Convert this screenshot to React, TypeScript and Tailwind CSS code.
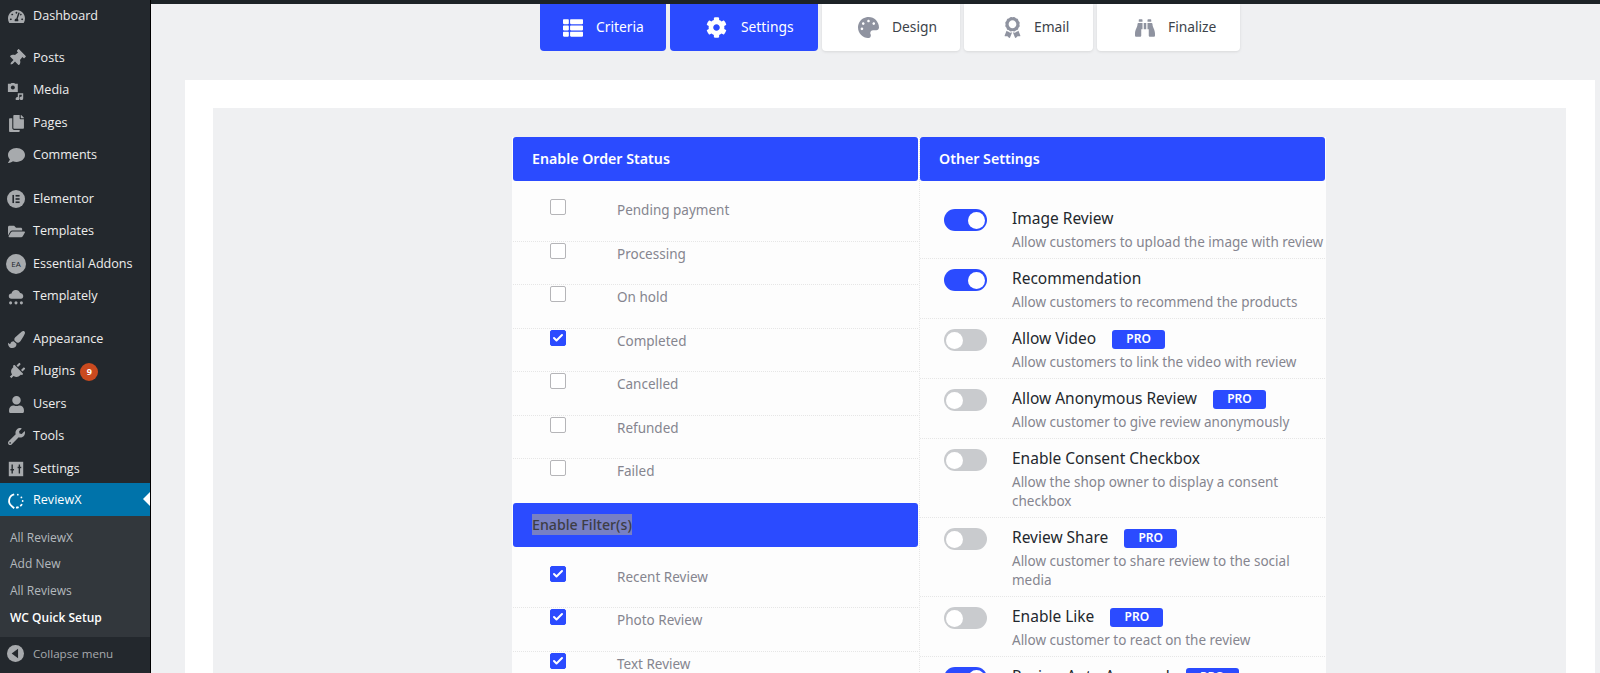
import { Check } from "lucide-react"
import {
  FaAward,
  FaBinoculars,
  FaCog,
  FaComment,
  FaCopy,
  FaFolderOpen,
  FaPaintBrush,
  FaPalette,
  FaPlug,
  FaTachometerAlt,
  FaThList,
  FaThumbtack,
  FaUser,
  FaWrench,
} from "react-icons/fa"
import type { ReactNode } from "react"

function MediaIcon() {
  return (
    <svg viewBox="0 0 20 20" className="h-[18px] w-[18px]" fill="#a7aaad">
      <path d="M1 2h3l1-1h3l1 1h3v9H1z" />
      <circle cx="6.5" cy="6" r="2.2" fill="#23282d" />
      <path d="M12 12.5h6V18a2 2 0 1 1-1.6-1.9V14.3h-2.8V18.6a2 2 0 1 1-1.6-1.9z" />
    </svg>
  )
}

function ElementorIcon() {
  return (
    <svg viewBox="0 0 20 20" className="h-[18px] w-[18px]">
      <circle cx="10" cy="10" r="10" fill="#a7aaad" />
      <rect x="6" y="5.5" width="1.8" height="9" fill="#23282d" />
      <rect x="9.5" y="5.5" width="4.5" height="1.8" fill="#23282d" />
      <rect x="9.5" y="9.1" width="4.5" height="1.8" fill="#23282d" />
      <rect x="9.5" y="12.7" width="4.5" height="1.8" fill="#23282d" />
    </svg>
  )
}

function EssentialIcon() {
  return (
    <span className="flex h-[20px] w-[20px] shrink-0 items-center justify-center rounded-full bg-[#a7aaad] text-[8px] leading-none text-[#23282d]">
      EA
    </span>
  )
}

function ReviewXIcon() {
  return (
    <svg viewBox="0 0 20 20" className="h-[18px] w-[18px]" fill="none" stroke="#fff" strokeWidth="2">
      <path d="M8 2.6a7.4 7.4 0 0 0-2.6 13.2L8 18" />
      <path d="M10 17.4a7.4 7.4 0 0 0 6.8-4.4" strokeDasharray="3 2" />
      <circle cx="12" cy="3" r="1" fill="#fff" stroke="none" />
      <circle cx="16" cy="6" r="1" fill="#fff" stroke="none" />
      <circle cx="17.4" cy="10" r="1" fill="#fff" stroke="none" />
    </svg>
  )
}

function CloudDots() {
  return (
    <svg viewBox="0 0 20 20" className="h-[18px] w-[18px]" fill="#a7aaad">
      <path d="M5 12a3 3 0 0 1 0-6 5 5 0 0 1 9.5-.5A3.3 3.3 0 0 1 15.5 12z" />
      <circle cx="4" cy="16.5" r="1.7" />
      <circle cx="10" cy="16.5" r="1.7" />
      <circle cx="16" cy="16.5" r="1.7" />
    </svg>
  )
}

function SettingsIcon() {
  return (
    <svg viewBox="0 0 20 20" className="h-[18px] w-[18px]">
      <rect x="2" y="2" width="16" height="16" fill="#a7aaad" />
      <rect x="5" y="5" width="1.5" height="10" fill="#23282d" />
      <rect x="3.8" y="10" width="4" height="1.6" fill="#23282d" />
      <rect x="13" y="5" width="1.5" height="10" fill="#23282d" />
      <rect x="11.8" y="7.5" width="4" height="1.6" fill="#23282d" />
    </svg>
  )
}

function CollapseIcon() {
  return (
    <svg viewBox="0 0 20 20" className="h-[17px] w-[17px]">
      <circle cx="10" cy="10" r="10" fill="#a7aaad" />
      <path d="M13 4.5v11L5.5 10z" fill="#23282d" />
    </svg>
  )
}

const iconClass = "h-[17px] w-[17px] text-[#a7aaad]"

const menuTop: { label: string; icon: ReactNode; box: string; badge?: string }[] = [
  { label: "Posts", icon: <FaThumbtack className={`${iconClass} rotate-45`} />, box: "mt-[10px] h-[32.5px]" },
  { label: "Media", icon: <MediaIcon />, box: "h-[32.5px]" },
  { label: "Pages", icon: <FaCopy className={iconClass} />, box: "h-[32.5px]" },
  { label: "Comments", icon: <FaComment className={iconClass} />, box: "h-[32.5px]" },
  { label: "Elementor", icon: <ElementorIcon />, box: "mt-[11px] h-[32.5px]" },
  { label: "Templates", icon: <FaFolderOpen className={iconClass} />, box: "h-[32.5px]" },
  { label: "Essential Addons", icon: <EssentialIcon />, box: "h-[32.5px]" },
  { label: "Templately", icon: <CloudDots />, box: "h-[32.5px]" },
  { label: "Appearance", icon: <FaPaintBrush className={iconClass} />, box: "mt-[10px] h-[32.5px]" },
  { label: "Plugins", icon: <FaPlug className={`${iconClass} rotate-45`} />, box: "h-[32.5px]", badge: "9" },
  { label: "Users", icon: <FaUser className={iconClass} />, box: "h-[32.5px]" },
  { label: "Tools", icon: <FaWrench className={iconClass} />, box: "h-[32.5px]" },
  { label: "Settings", icon: <SettingsIcon />, box: "h-[30px] pt-[2.5px]" },
]

const tabs = [
  { label: "Criteria", icon: FaThList, active: true, box: "w-[126px] pl-[23px] gap-[13px]", size: "h-[20px] w-[20px]" },
  { label: "Settings", icon: FaCog, active: true, box: "w-[148px] pl-[36px] gap-[14px]", size: "h-[21px] w-[21px]" },
  { label: "Design", icon: FaPalette, active: false, box: "w-[138px] pl-[36px] gap-[13px]", size: "h-[21px] w-[21px]" },
  { label: "Email", icon: FaAward, active: false, box: "w-[129px] pl-[38px] gap-[11px]", size: "h-[21px] w-[21px]" },
  { label: "Finalize", icon: FaBinoculars, active: false, box: "w-[143px] pl-[38px] gap-[13px]", size: "h-[20px] w-[20px]" },
]

const orderStatus = [
  { label: "Pending payment", checked: false },
  { label: "Processing", checked: false },
  { label: "On hold", checked: false },
  { label: "Completed", checked: true },
  { label: "Cancelled", checked: false },
  { label: "Refunded", checked: false },
  { label: "Failed", checked: false },
]

const filters = ["Recent Review", "Photo Review", "Text Review"]

const settings = [
  { title: "Image Review", desc: "Allow customers to upload the image with review", on: true, pro: false },
  { title: "Recommendation", desc: "Allow customers to recommend the products", on: true, pro: false },
  { title: "Allow Video", desc: "Allow customers to link the video with review", on: false, pro: true },
  { title: "Allow Anonymous Review", desc: "Allow customer to give review anonymously", on: false, pro: true },
  { title: "Enable Consent Checkbox", desc: "Allow the shop owner to display a consent checkbox", on: false, pro: false },
  { title: "Review Share", desc: "Allow customer to share review to the social media", on: false, pro: true },
  { title: "Enable Like", desc: "Allow customer to react on the review", on: false, pro: true },
  { title: "Review Auto Approval", desc: "", on: true, pro: true },
]

function CheckRow({ label, checked, last }: { label: string; checked: boolean; last?: boolean }) {
  return (
    <div className={`flex h-[43.5px] items-start pl-[37px] ${last ? "" : "border-b border-dotted border-[#e6e6e6]"}`}>
      <span
        className={`mt-[1px] flex h-4 w-4 items-center justify-center rounded-[2px] border ${
          checked ? "border-[#2b4bff] bg-[#2b4bff]" : "border-[#b5b5b8] bg-white"
        }`}
      >
        {checked && <Check className="h-3 w-3 text-white" strokeWidth={4} />}
      </span>
      <span className="ml-[51px] mt-[2px] text-[13.5px] text-[#85858f]">{label}</span>
    </div>
  )
}

function SectionHeader({ title, selected }: { title: string; selected?: boolean }) {
  return (
    <div className="flex h-[44px] items-center rounded-[3px] bg-[#2b4bff] pl-[19px] text-[14.2px] font-semibold text-white">
      {selected ? <span className="bg-[#7880c4] font-medium text-[#3d3d45]">{title}</span> : title}
    </div>
  )
}

export default function App() {
  return (
    <div className="flex h-[673px] w-[1600px] overflow-hidden bg-[#eff0f2] font-['Noto_Sans',sans-serif]">
      <aside className="flex w-[151px] shrink-0 flex-col border-r border-black bg-[#23282d] font-['Open_Sans',sans-serif] text-[12.6px] text-[#eeeeee]">
        <div className="flex h-[32px] items-center gap-[8px] pl-[7px]">
          <span className="flex w-[18px] justify-center">
            <FaTachometerAlt className={iconClass} />
          </span>
          <span>Dashboard</span>
        </div>
        {menuTop.map((item) => (
          <div key={item.label} className={`flex items-center gap-[8px] pl-[7px] ${item.box}`}>
            <span className="flex w-[18px] justify-center">{item.icon}</span>
            <span>{item.label}</span>
            {item.badge && (
              <span className="-ml-[3px] flex h-[18px] w-[18px] items-center justify-center rounded-full bg-[#ca4a1f] text-[9px] font-bold text-white">
                {item.badge}
              </span>
            )}
          </div>
        ))}
        <div className="relative flex h-[33px] items-center gap-[8px] bg-[#0073aa] pl-[7px] pt-[2px] text-white">
          <ReviewXIcon />
          <span>ReviewX</span>
          <span className="absolute right-0 top-[9px] h-0 w-0 border-y-[7px] border-r-[7px] border-y-transparent border-r-white" />
        </div>
        <div className="flex h-[120.5px] flex-col gap-[10.5px] bg-[#32373c] pl-[10px] pt-[13.5px] text-[12px] leading-[16px] text-[#b4b9be]">
          <span>All ReviewX</span>
          <span>Add New</span>
          <span>All Reviews</span>
          <span className="mt-[1px] font-semibold text-white">WC Quick Setup</span>
        </div>
        <div className="flex flex-1 items-center gap-[9px] pb-[3px] pl-[7px] text-[11.6px] text-[#a7aaad]">
          <CollapseIcon />
          <span>Collapse menu</span>
        </div>
      </aside>

      <main className="flex min-w-0 flex-1 flex-col">
        <div className="h-[4px] shrink-0 bg-[#1d2327]" />
        <nav className="flex h-[47px] shrink-0 gap-[4px] pl-[389px]">
          {tabs.map((tab) => {
            const Icon = tab.icon
            return (
              <div
                key={tab.label}
                className={`flex ${tab.box} items-center rounded-b-[4px] text-[13.8px] ${
                  tab.active ? "bg-[#2b4bff] text-white" : "bg-white text-[#3c434a] shadow-[0_1px_3px_rgba(0,0,0,0.1)]"
                }`}
              >
                <Icon className={`${tab.size} ${tab.active ? "text-white" : "text-[#8f93a0]"}`} />
                <span>{tab.label}</span>
              </div>
            )
          })}
        </nav>

        <div className="ml-[34px] mr-[5px] mt-[29px] flex-1 bg-white pl-[28px] pr-[29px] pt-[28px]">
          <div className="h-full bg-[#eff0f2] pl-[299px] pt-[29px]">
            <div className="flex h-full w-[814px] items-start bg-[#fdfdfd] pl-[1px]">
              <section className="w-[405px] shrink-0">
                <SectionHeader title="Enable Order Status" />
                <div className="pt-[17px]">
                  {orderStatus.map((row, index) => (
                    <CheckRow key={row.label} label={row.label} checked={row.checked} last={index === orderStatus.length - 1} />
                  ))}
                </div>
                <SectionHeader title="Enable Filter(s)" selected />
                <div className="pt-[18px]">
                  {filters.map((label) => (
                    <CheckRow key={label} label={label} checked />
                  ))}
                </div>
              </section>
              <section className="ml-[1px] w-[406px] shrink-0 border-l border-dotted border-[#e6e6e6]">
                <SectionHeader title="Other Settings" />
                <div className="pt-[18px]">
                  {settings.map((row) => (
                    <div key={row.title} className="flex items-start border-b border-dotted border-[#e6e6e6] pb-[6px] pl-[24px] pt-[10px]">
                      <span
                        className={`flex h-[22px] w-[43px] shrink-0 items-center rounded-full px-[2px] ${
                          row.on ? "justify-end bg-[#2b4bff]" : "justify-start bg-[#c9cbce]"
                        }`}
                      >
                        <span className="h-[17px] w-[17px] rounded-full bg-white" />
                      </span>
                      <div className="ml-[25px] mt-[1px] min-w-0">
                        <div className="flex h-[18px] items-center gap-[16px] text-[15.5px] text-[#23282d]">
                          <span>{row.title}</span>
                          {row.pro && (
                            <span className="flex h-[19px] w-[53px] items-center justify-center rounded-[3px] bg-[#2b4bff] text-[12px] font-semibold text-white">
                              PRO
                            </span>
                          )}
                        </div>
                        {row.desc && <p className="mt-[5px] text-[13.5px] leading-[19px] text-[#85858f]">{row.desc}</p>}
                      </div>
                    </div>
                  ))}
                </div>
              </section>
            </div>
          </div>
        </div>
      </main>
    </div>
  )
}
